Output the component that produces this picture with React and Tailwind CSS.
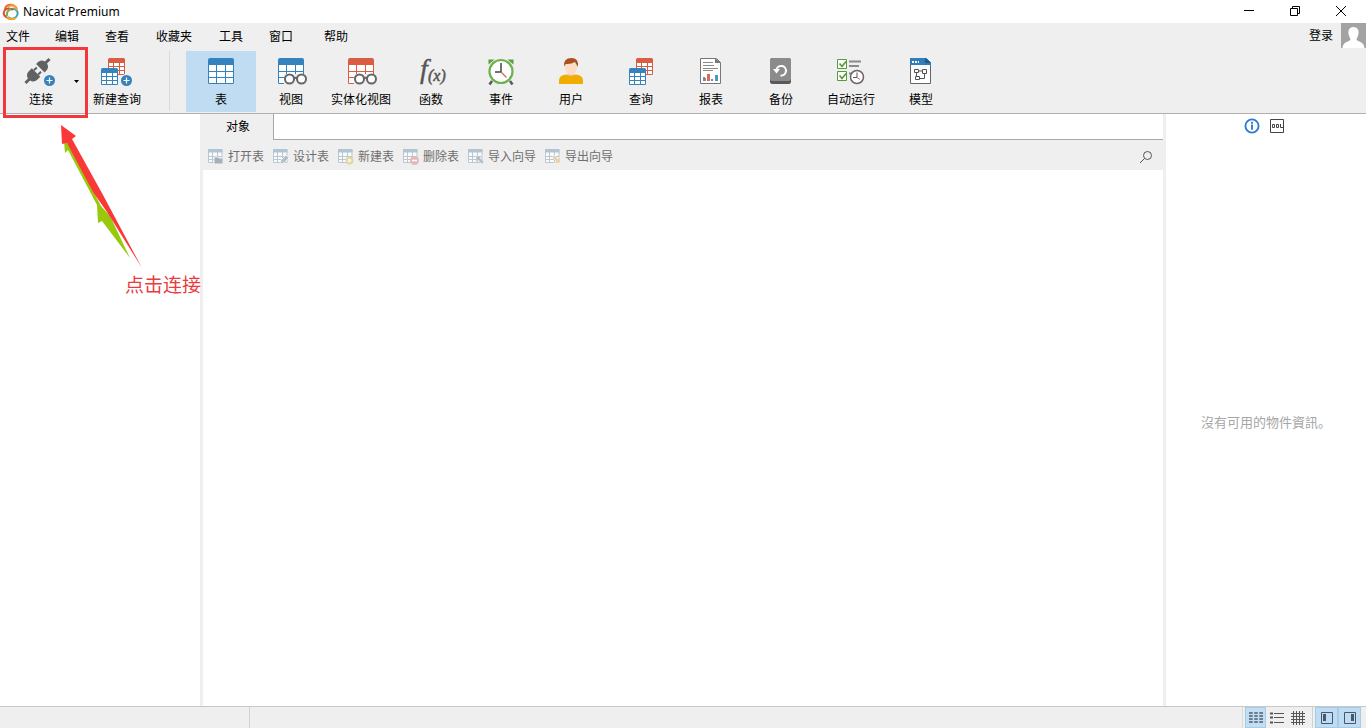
import React, { useState } from "react";

const MENU = ["文件", "编辑", "查看", "收藏夹", "工具", "窗口", "帮助"];

/* Grid icons shared by the table, view and query buttons */
function TableShape({ color }) {
  return (
    <>
      <path d="M1 7h26v18a1 1 0 0 1-1 1H2a1 1 0 0 1-1-1z" fill="#fff" />
      <path
        d="M1.5 7v18.5h25V7M1 13.5h26M1 19.5h26M9.500 7v19M18.500 7v19"
        fill="none"
        stroke={color}
      />
      <path d="M1 2a2 2 0 0 1 2-2h22a2 2 0 0 1 2 2v5H1z" fill={color} />
    </>
  );
}

function SmallTable({ x, y, color }) {
  return (
    <g transform={`translate(${x} ${y})`}>
      <path d="M0 5h17v12H0z" fill="#fff" />
      <path
        d="M.5 5v11.5h16V5M0 8.5h17M0 12.5h17M5.500 5v12M11.500 5v12"
        fill="none"
        stroke={color}
      />
      <path d="M0 1.500a1.500 1.500 0 0 1 1.500-1.500h14a1.500 1.500 0 0 1 1.500 1.500V5H0z" fill={color} />
    </g>
  );
}

function PlusBadge({ x, y }) {
  return (
    <g>
      <circle cx={x} cy={y} r="6.500" fill="#efefef" />
      <circle cx={x} cy={y} r="5.500" fill="#3583ba" />
      <path d={`M${x - 3} ${y}h6M${x} ${y - 3}v6`} stroke="#fff" strokeWidth="1.200" />
    </g>
  );
}

function TableIcon() {
  return (
    <svg className="h-7 w-7" viewBox="0 0 28 28" aria-hidden="true">
      <TableShape color="#3583bd" />
    </svg>
  );
}

function ViewIcon({ color = "#3583bd" }) {
  return (
    <svg className="h-7 w-7 overflow-visible" viewBox="0 0 28 28" aria-hidden="true">
      <TableShape color={color} />
      <path d="M7 16h22v12H7z" fill="#efefef" />
      <g fill="#fff" stroke="#666" strokeWidth="2">
        <circle cx="12.500" cy="21" r="4.500" />
        <circle cx="24.500" cy="21" r="4.500" />
        <path d="M16.500 20.500q2-1.500 4 0" fill="none" />
      </g>
    </svg>
  );
}

function MaterializedIcon() {
  return <ViewIcon color="#d95d42" />;
}

function FunctionIcon() {
  return (
    <svg className="h-7 w-7 overflow-visible" viewBox="0 0 28 28" aria-hidden="true">
      <g fill="#555" stroke="#555" fontFamily="Liberation Serif, serif" fontStyle="italic">
        <text x="3" y="20" fontSize="28" strokeWidth=".4">f</text>
        <text x="11" y="23" fontSize="16" strokeWidth=".5">(x)</text>
      </g>
    </svg>
  );
}

function EventIcon() {
  return (
    <svg className="h-7 w-7" viewBox="0 0 28 28" aria-hidden="true">
      <path d="M1.500 6.500V1.500h6zM26.500 6.500V1.500h-6z" fill="#57a03c" />
      <path d="M5 23l-2.500 3.500M23 23l2.500 3.500" stroke="#57595a" strokeWidth="2.500" />
      <circle cx="14" cy="13.500" r="11.500" fill="#fff" stroke="#6cb24e" strokeWidth="2.200" />
      <path d="M14 5v9H8" fill="none" stroke="#444" strokeWidth="1.500" />
      <path d="M14 14l5.500 5.500" stroke="#d9634c" strokeWidth="1.300" />
    </svg>
  );
}

function UserIcon() {
  return (
    <svg className="h-7 w-7" viewBox="0 0 28 28" aria-hidden="true">
      <path d="M11 13h6v5h-6z" fill="#f3c6a8" />
      <path d="M2 26v-3.500Q2 17 10 16.500q4 2.500 8 0 8 .5 8 6V26z" fill="#f0ad00" />
      <ellipse cx="14" cy="9" rx="6" ry="8" fill="#fbdcc6" />
      <path d="M7 9Q6 0 14.500 0 22 0 21 9q-2-3-3-5-4 2.500-9 2-1.500 1-2 3z" fill="#a9521d" />
    </svg>
  );
}

function QueryIcon() {
  return (
    <svg className="h-7 w-7" viewBox="0 0 28 28" aria-hidden="true">
      <SmallTable x={9} y={0} color="#d95d42" />
      <SmallTable x={2} y={10} color="#3583bd" />
    </svg>
  );
}

function NewQueryIcon() {
  return (
    <svg className="h-7 w-8 overflow-visible" viewBox="0 0 32 28" aria-hidden="true">
      <SmallTable x={7} y={0} color="#d95d42" />
      <SmallTable x={0} y={10} color="#3583bd" />
      <PlusBadge x={25.5} y={22.5} />
    </svg>
  );
}

function ConnectIcon() {
  return (
    <svg className="h-7 w-8 overflow-visible" viewBox="0 0 32 28" aria-hidden="true">
      <g transform="translate(12.500 13) rotate(-45)" fill="#5f6163">
        <path d="M-17-1.500h5Q-11-6-6-6h4V6h-4q-5 0-6-4.500h-5z" />
        <path d="M-2-4h4v2h-4zM-2 2h4v2h-4z" />
        <path d="M4-6h2q5 0 6 4.500h5v3h-5Q11 6 6 6H4z" />
      </g>
      <PlusBadge x={24.5} y={22.5} />
    </svg>
  );
}

function ReportIcon() {
  return (
    <svg className="h-7 w-7" viewBox="0 0 28 28" aria-hidden="true">
      <path d="M3.500.5h16l4 4v21h-20z" fill="#fff" stroke="#777" />
      <path d="M18 0l6 5h-6z" fill="#777" />
      <path d="M6 4.500h10M6 7.500h11M6 10.500h15M6 12.500h10" stroke="#8a8a8a" />
      <path d="M6 19h2v4H6zM14 21h2v2h-2zM18 17h3v6h-3z" fill="#5493c4" />
      <path d="M10 16h3v7h-3zM8 20h1v3H8z" fill="#dc6a50" />
    </svg>
  );
}

function BackupIcon() {
  return (
    <svg className="h-7 w-7" viewBox="0 0 28 28" aria-hidden="true">
      <rect x="3" y="0" width="21" height="26" rx="2.500" fill="#595959" />
      <rect x="3" y="0" width="21" height="23" rx="2.500" fill="#8b8b8b" />
      <path d="M9.500 11.500a4.800 4.800 0 1 1 4 6" fill="none" stroke="#fff" strokeWidth="2" />
      <path d="M6 11h7l-3.500 4.500z" fill="#fff" />
    </svg>
  );
}

function AutomationIcon() {
  return (
    <svg className="h-7 w-7 overflow-visible" viewBox="0 0 28 28" aria-hidden="true">
      <g fill="#fff" stroke="#559b3b">
        <path d="M.5 1.500h9v9h-9zM.5 13.500h9v9h-9z" />
        <path d="M2.500 5.500l2.500 3 4-5M2.500 17.500l2.500 3 4-5" fill="none" strokeWidth="1.700" />
      </g>
      <path d="M12 3.500h12M12 8h10M12 15.500h3" stroke="#8a8a8a" strokeWidth="1.800" />
      <circle cx="20" cy="19" r="6.500" fill="#fff" stroke="#6c6469" strokeWidth="1.500" />
      <path d="M20 14.500v5h-4" fill="none" stroke="#555" />
      <path d="M20 19.500l3 2" stroke="#d9634c" />
    </svg>
  );
}

function ModelIcon() {
  return (
    <svg className="h-7 w-7" viewBox="0 0 28 28" aria-hidden="true">
      <path d="M3.500.5h16l4 4v21h-20z" fill="#fff" stroke="#666" />
      <path d="M3 0h16l5 5v2H3z" fill="#2f7fba" />
      <path d="M18 0l6 5h-6z" fill="#1b5b8e" />
      <path d="M5 3h2v2H5zM8 3h2v2H8zM11 3h1v2h-1z" fill="#fff" />
      <path
        d="M7.500 11.500h4v3h-4zM15.500 11.500h4v4h-4zM8.500 18.500h4v3h-4zM11.500 13h4M9.500 14.500v4M12.500 20.500h5v-5"
        fill="none"
        stroke="#555"
      />
    </svg>
  );
}

const VIEWS = [
  { name: "表", Icon: TableIcon },
  { name: "视图", Icon: ViewIcon },
  { name: "实体化视图", Icon: MaterializedIcon },
  { name: "函数", Icon: FunctionIcon },
  { name: "事件", Icon: EventIcon },
  { name: "用户", Icon: UserIcon },
  { name: "查询", Icon: QueryIcon },
  { name: "报表", Icon: ReportIcon },
  { name: "备份", Icon: BackupIcon },
  { name: "自动运行", Icon: AutomationIcon },
  { name: "模型", Icon: ModelIcon },
];

/* Small marks in the lower right corner of the object actions */
const ACTIONS = [
  {
    name: "打开表",
    mark: <path d="M6 8h4l1 1h4v6H6z" fill="#a3b1bd" stroke="#efefef" />,
  },
  {
    name: "设计表",
    mark: <path d="M7 15l1-4 5-5 3 3-5 5z" fill="#b4bfc9" stroke="#efefef" />,
  },
  {
    name: "新建表",
    mark: <circle cx="11.500" cy="11.500" r="3" fill="#f7f1d8" stroke="#e0d5a6" strokeWidth="2" />,
  },
  {
    name: "删除表",
    mark: (
      <>
        <circle cx="11.500" cy="11.500" r="4.500" fill="#e3b8ba" />
        <path d="M9 11.500h5" stroke="#fff" strokeWidth="1.500" />
      </>
    ),
  },
  {
    name: "导入向导",
    mark: <path d="M8 7h6l-2 2 4 4-2 2-4-4-2 2z" fill="#b2bfca" stroke="#efefef" strokeWidth=".5" />,
  },
  {
    name: "导出向导",
    mark: <path d="M15 14H9l2-2-4-4 2-2 4 4 2-2z" fill="#eccfa8" stroke="#efefef" strokeWidth=".5" />,
  },
];

function ActionIcon({ mark }) {
  return (
    <svg className="h-4 w-4 shrink-0" viewBox="0 0 16 16" aria-hidden="true">
      <path d="M.5 1v12.500H14V1" fill="#f8fafb" stroke="#bcc8d0" />
      <path d="M0 7.500h14M0 10.500h14M4.500 3v11M9.500 3v11" stroke="#bcc8d0" />
      <path d="M0 0h14.500v3.500H0z" fill="#b0c4d1" />
      {mark}
    </svg>
  );
}

function ToolButton({ children, label, active, className = "w-[70px]", ...rest }) {
  return (
    <button
      type="button"
      className={`flex h-[61px] shrink-0 flex-col items-center pt-[7px] ${className} ${
        active ? "bg-[#bfdcf3]" : ""
      }`}
      {...rest}
    >
      {children}
      <span className="mt-1 whitespace-nowrap leading-5">{label}</span>
    </button>
  );
}

function TitleBar() {
  return (
    <header className="flex h-[23px] items-center bg-white pr-0.5 pl-0.5">
      <svg className="h-[18px] w-[18px]" viewBox="0 0 18 18" fill="none" strokeWidth="2" aria-hidden="true">
        <path d="M9 6Q13 5 15 8q2 4-2 7-4 2-7-1" stroke="#3aa8b5" />
        <path d="M3 7Q3 3 7 2q5-1 8 4" stroke="#f0672f" />
        <path d="M6 4q6-4 9 3" stroke="#f5a23a" />
        <path d="M11 7Q6 4 3 7q-3 4 1 7 3 2 5 2" stroke="#e2473c" />
        <path d="M5 13Q4 8 9 6" stroke="#6bb645" />
        <path d="M5 14q4 4 9 1" stroke="#f4a827" />
      </svg>
      <h1 className="ml-[3px] font-['Noto_Sans'] text-[12px] leading-5">Navicat Premium</h1>
      <div className="ml-auto flex h-full">
        <button type="button" aria-label="最小化" className="flex w-[46px] items-center justify-center">
          <svg className="h-3 w-3" viewBox="0 0 12 12" stroke="#000" aria-hidden="true">
            <path d="M1 4.500h10" />
          </svg>
        </button>
        <button type="button" aria-label="还原" className="flex w-[46px] items-center justify-center">
          <svg className="h-3 w-3" viewBox="0 0 12 12" fill="none" stroke="#000" aria-hidden="true">
            <path d="M1.500 2.500h7v7h-7zM3.500 2V.5h7v7H9" />
          </svg>
        </button>
        <button type="button" aria-label="关闭" className="flex w-[46px] items-center justify-center">
          <svg className="h-3 w-3" viewBox="0 0 12 12" stroke="#000" aria-hidden="true">
            <path d="M1 0l10 10M11 0L1 10" />
          </svg>
        </button>
      </div>
    </header>
  );
}

function MenuBar() {
  return (
    <div className="flex h-[25px] items-center justify-between">
      <nav className="grid grid-cols-[49px_50px_51px_63px_50px_55px_auto] pt-0.5 pl-1.5">
        {MENU.map((item) => (
          <button key={item} type="button" className="text-left leading-5">
            {item}
          </button>
        ))}
      </nav>
      <button type="button" className="flex items-center gap-2">
        登录
        <svg className="h-[25px] w-[25px] bg-[#a3a3a3]" viewBox="0 0 25 25" fill="#fff" aria-hidden="true">
          <path d="M12.500 4c4 0 5.500 3 5 6.500-.3 3-1.500 4-2 5.500 0 3 7.500 2 8 9h-22c.5-7 8-6 8-9-.5-1.500-1.700-2.500-2-5.500C7 7 8.500 4 12.500 4z" />
        </svg>
      </button>
    </div>
  );
}

function StatusBar() {
  return (
    <footer className="flex h-[22px] items-stretch border-t border-[#c8c8c8] bg-[#efefef]">
      <div className="w-[250px] border-r border-[#d2d2d2]" />
      <div className="ml-auto flex border-l border-[#dcdcdc] pl-0.5">
        <button type="button" aria-label="列表" className="flex w-[21px] items-center justify-center border border-[#a5cdea] bg-[#c3def2]">
          <svg className="h-3.5 w-3.5 shrink-0" viewBox="0 0 14 14" stroke="#4b5f70" strokeWidth="2" aria-hidden="true">
            <path d="M0 2h14M0 5h14M0 8h14M0 11h14" strokeDasharray="4 1" strokeWidth="1.600" />
            <path d="M4.500 1v12M9.500 1v12" stroke="#c3def2" strokeWidth="1.500" />
          </svg>
        </button>
        <button type="button" aria-label="详细信息" className="flex w-[21px] items-center justify-center">
          <svg className="h-3.5 w-3.5 shrink-0" viewBox="0 0 14 14" stroke="#555" aria-hidden="true">
            <path d="M0 2.500h3M0 6.500h3M0 11.500h3" strokeWidth="2" />
            <path d="M4 2.500h10M4 6.500h10M4 11.500h10" />
          </svg>
        </button>
        <button type="button" aria-label="ER 图表" className="flex w-[21px] items-center justify-center">
          <svg className="h-3.5 w-3.5 shrink-0" viewBox="0 0 14 14" stroke="#555" aria-hidden="true">
            <path d="M0 2.500h14M0 5.500h14M0 8.500h14M0 11.500h14M2.500 0v14M5.500 0v14M8.500 0v14M11.500 0v14" />
          </svg>
        </button>
      </div>
      <div className="mr-[5px] ml-1 flex border-l border-[#d2d2d2] pl-0.5">
        <button type="button" aria-label="导航窗格" className="flex w-[23px] items-center justify-center border border-[#a5cdea] bg-[#bfdcf3]">
          <svg className="h-[13px] w-[13px] shrink-0" viewBox="0 0 13 13" fill="none" stroke="#46596a" aria-hidden="true">
            <path d="M1.500 1.500h11v11h-11z" />
            <path d="M3 3h3v7H3z" fill="#46596a" stroke="none" />
          </svg>
        </button>
        <button type="button" aria-label="信息窗格" className="flex w-[23px] items-center justify-center border border-[#a5cdea] bg-[#bfdcf3]">
          <svg className="h-[13px] w-[13px] shrink-0" viewBox="0 0 13 13" fill="none" stroke="#46596a" aria-hidden="true">
            <path d="M1.500 1.500h11v11h-11z" />
            <path d="M8 3h3v7H8z" fill="#46596a" stroke="none" />
          </svg>
        </button>
      </div>
    </footer>
  );
}

/* Callout drawn over the window: frame, arrows and caption */
function Callout() {
  return (
    <div className="pointer-events-none absolute top-0 left-0">
      <div className="absolute top-[47px] left-[3px] h-[71px] w-[85px] border-3 border-[#f2383d]" />
      <svg className="absolute top-[120px] left-[50px] h-[150px] w-[100px]" viewBox="50 120 100 150" aria-hidden="true">
        <path d="M64 141l1 12 3-3 29 55 1 18 4-2 28 37-20-42-9-10-31-60z" fill="#98c90a" />
        <path d="M61 125l15 11-4 3 31 56 39 73-35-56-14-20-26-49-5 1z" fill="#fa3838" />
      </svg>
      <p className="absolute top-[274px] left-[125px] text-[19px] leading-6 whitespace-nowrap text-[#ea3b40]">
        点击连接
      </p>
    </div>
  );
}

export default function App() {
  const [view, setView] = useState("表");

  return (
    <div className="relative flex min-h-screen flex-col bg-[#efefef] font-['Liberation_Sans','Noto_Sans_CJK_SC',sans-serif] text-[12px] text-black">
      <TitleBar />
      <MenuBar />

      <div className="flex h-[66px] items-start border-b border-[#b0b0b0] pt-[3px] pl-[11px]">
        <ToolButton label="连接" className="w-[60px]">
          <ConnectIcon />
        </ToolButton>
        <button type="button" aria-label="连接类型" className="flex h-[61px] w-[11px] items-center justify-center">
          <svg className="h-[3px] w-[5px]" viewBox="0 0 5 3" aria-hidden="true">
            <path d="M0 0h5L2.500 3z" />
          </svg>
        </button>
        <ToolButton label="新建查询">
          <NewQueryIcon />
        </ToolButton>
        <div className="mr-4 ml-[17px] h-[60px] w-px shrink-0 bg-[#dadada]" />
        {VIEWS.map(({ name, Icon }) => (
          <ToolButton key={name} label={name} active={view === name} onClick={() => setView(name)}>
            <Icon />
          </ToolButton>
        ))}
      </div>

      <div className="flex flex-1">
        <aside className="w-[200px] shrink-0 bg-white" />

        <main className="flex min-w-0 flex-1 flex-col border-x-3 border-[#efefef]">
          <div className="flex h-[26px]">
            <button type="button" className="w-[70px] leading-6">
              对象
            </button>
            <div className="flex-1 border-b border-l border-[#a8a8a8] bg-white" />
          </div>
          <div className="flex h-[30px] items-center pt-1 pr-2.5 pl-[5px] text-[#6e6e6e]">
            <div className="flex gap-[9px]">
              {ACTIONS.map(({ name, mark }) => (
                <button key={name} type="button" className="flex items-center gap-1 whitespace-nowrap">
                  <ActionIcon mark={mark} />
                  {name}
                </button>
              ))}
            </div>
            <button type="button" aria-label="搜索" className="ml-auto">
              <svg className="h-3.5 w-3.5" viewBox="0 0 14 14" fill="none" stroke="#555" aria-hidden="true">
                <circle cx="8.500" cy="5.500" r="4" />
                <path d="M5.500 8.500L1 13" />
              </svg>
            </button>
          </div>
          <div className="flex-1 bg-white" />
        </main>

        <aside className="flex w-[200px] shrink-0 flex-col bg-white">
          <div className="flex h-6 items-center justify-center gap-2.5 pr-1">
            <button type="button" aria-label="信息">
              <svg className="h-4 w-4" viewBox="0 0 17 17" fill="none" stroke="#2b7cd3" strokeWidth="2" aria-hidden="true">
                <circle cx="8.500" cy="8.500" r="7" />
                <path d="M8.500 7v5.500M8.500 4v2" />
              </svg>
            </button>
            <button type="button" aria-label="DDL">
              <svg className="h-3.5 w-3.5" viewBox="0 0 14 14" fill="none" stroke="#444" aria-hidden="true">
                <path d="M.5.5h13v13H.5z" />
                <path d="M2.500 5.500h2v3h-2zM6.500 5.500h2v3h-2zM10.500 5v3.500H13" />
              </svg>
            </button>
          </div>
          <div className="flex flex-1 items-center justify-center font-['Noto_Sans_CJK_SC',sans-serif] text-[13px] text-[#a6a6a6]">
            沒有可用的物件資訊。
          </div>
        </aside>
      </div>

      <StatusBar />
      <Callout />
    </div>
  );
}
